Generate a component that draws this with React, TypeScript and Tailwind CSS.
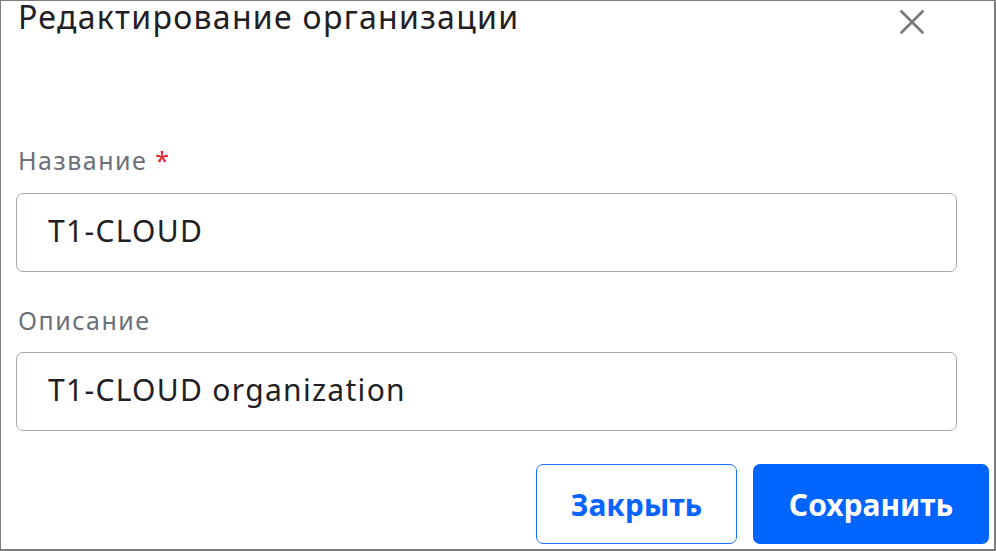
export default function App() {
  return (
    <div
      className="w-[996px] h-[551px] bg-white border-t border-l border-r-2 border-b-2 border-[#7d7d7d] overflow-hidden"
      style={{ fontFamily: '"Noto Sans", sans-serif' }}
    >
      <div className="flex items-start justify-between h-[35px] pl-[17px] pr-[70px]">
        <h1 className="text-[32px] leading-[32px] tracking-[1.3px] text-[#1f2023] whitespace-nowrap">
          Редактирование организации
        </h1>
        <button className="mt-[9px] text-[#767676]">
          <svg width="24" height="24" viewBox="0 0 24 24" fill="none" stroke="currentColor" strokeWidth="2.6" strokeLinecap="round">
            <path d="M1.5 1.5L22.5 22.5M22.5 1.5L1.5 22.5" />
          </svg>
        </button>
      </div>

      <div className="flex flex-col pl-[15px] pr-[37px] mt-[108px]">
        <label className="text-[25px] leading-[32px] h-[32px] tracking-[1.5px] text-[#6c707a] pl-[2px]">
          Название <span className="text-[#e5202e]">*</span>
        </label>
        <div className="mt-[17px] h-[79px] border border-[#a4a8b1] rounded-[7px] flex items-center pl-[31px]">
          <span className="text-[30px] leading-[40px] tracking-[1.3px] text-[#1f2023] -mt-[3px]">T1-CLOUD</span>
        </div>

        <label className="mt-[32px] text-[25px] leading-[32px] h-[32px] tracking-[1.5px] text-[#6c707a] pl-[2px]">Описание</label>
        <div className="mt-[16px] h-[79px] border border-[#a4a8b1] rounded-[7px] flex items-center pl-[31px]">
          <span className="text-[30px] leading-[40px] tracking-[1.3px] text-[#1f2023] -mt-[3px]">T1-CLOUD organization</span>
        </div>
      </div>

      <div className="flex justify-end gap-[16px] pr-[5px] mt-[33px]">
        <button className="w-[201px] h-[80px] rounded-[7px] border border-[#1a6dff] bg-white text-[#0a64ff] text-[30px] font-bold">
          Закрыть
        </button>
        <button className="w-[236px] h-[80px] rounded-[7px] bg-[#0064ff] text-white text-[30px] font-bold">
          Сохранить
        </button>
      </div>
    </div>
  );
}
